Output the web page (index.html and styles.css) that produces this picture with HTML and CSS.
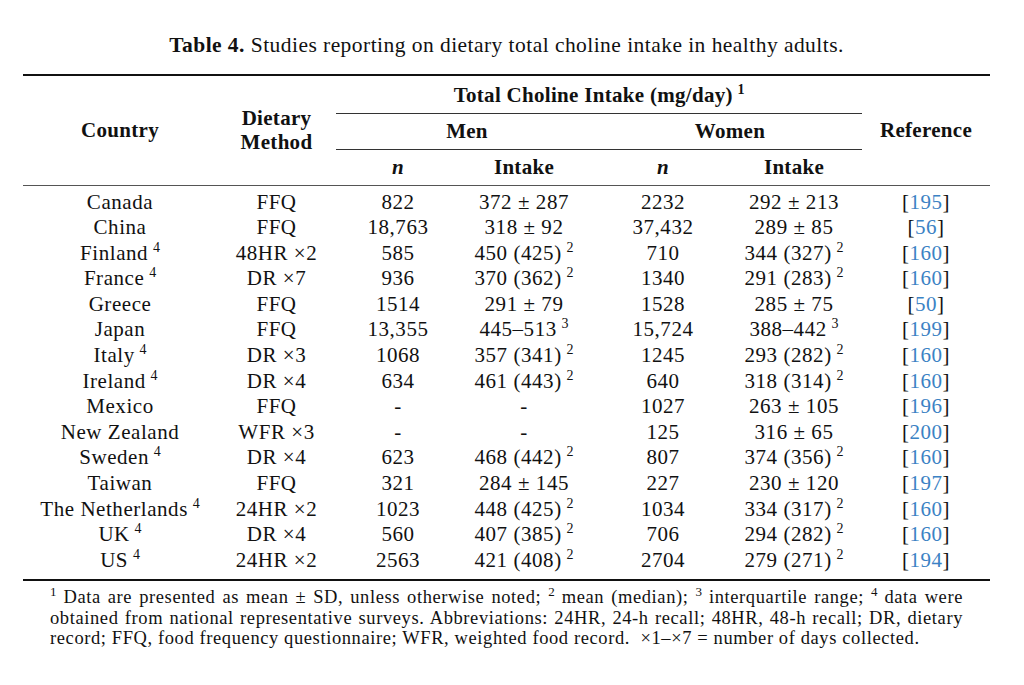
FILE: index.html
```html
<!DOCTYPE html>
<html>
<head>
<meta charset="utf-8">
<link rel="stylesheet" href="styles.css">
</head>
<body>
<div class="page">
  <p class="caption"><b>Table 4.</b> Studies reporting on dietary total choline intake in healthy adults.</p>
  <table class="tbl">
    <colgroup>
      <col class="c1"><col class="c2"><col class="c3"><col class="c4"><col class="c5"><col class="c6"><col class="c7">
    </colgroup>
    <thead>
      <tr class="h1">
        <th rowspan="3">Country</th>
        <th rowspan="3" class="two">Dietary<br>Method</th>
        <th colspan="4" class="grp">Total Choline Intake (mg/day) <sup>1</sup></th>
        <th rowspan="3">Reference</th>
      </tr>
      <tr class="h2">
        <th colspan="2" class="grp">Men</th>
        <th colspan="2" class="grp">Women</th>
      </tr>
      <tr class="h3">
        <th><i>n</i></th>
        <th class="mi">Intake</th>
        <th><i>n</i></th>
        <th class="wi">Intake</th>
      </tr>
    </thead>
    <tbody>
      <tr class="first"><td>Canada</td><td>FFQ</td><td>822</td><td class="mi">372 ± 287</td><td>2232</td><td class="wi">292 ± 213</td><td class="ref">[<a>195</a>]</td></tr>
      <tr><td>China</td><td>FFQ</td><td>18,763</td><td class="mi">318 ± 92</td><td>37,432</td><td class="wi">289 ± 85</td><td class="ref">[<a>56</a>]</td></tr>
      <tr><td>Finland <sup>4</sup></td><td>48HR ×2</td><td>585</td><td class="mi">450 (425) <sup>2</sup></td><td>710</td><td class="wi">344 (327) <sup>2</sup></td><td class="ref">[<a>160</a>]</td></tr>
      <tr><td>France <sup>4</sup></td><td>DR ×7</td><td>936</td><td class="mi">370 (362) <sup>2</sup></td><td>1340</td><td class="wi">291 (283) <sup>2</sup></td><td class="ref">[<a>160</a>]</td></tr>
      <tr><td>Greece</td><td>FFQ</td><td>1514</td><td class="mi">291 ± 79</td><td>1528</td><td class="wi">285 ± 75</td><td class="ref">[<a>50</a>]</td></tr>
      <tr><td>Japan</td><td>FFQ</td><td>13,355</td><td class="mi">445–513 <sup>3</sup></td><td>15,724</td><td class="wi">388–442 <sup>3</sup></td><td class="ref">[<a>199</a>]</td></tr>
      <tr><td>Italy <sup>4</sup></td><td>DR ×3</td><td>1068</td><td class="mi">357 (341) <sup>2</sup></td><td>1245</td><td class="wi">293 (282) <sup>2</sup></td><td class="ref">[<a>160</a>]</td></tr>
      <tr><td>Ireland <sup>4</sup></td><td>DR ×4</td><td>634</td><td class="mi">461 (443) <sup>2</sup></td><td>640</td><td class="wi">318 (314) <sup>2</sup></td><td class="ref">[<a>160</a>]</td></tr>
      <tr><td>Mexico</td><td>FFQ</td><td>-</td><td class="mi">-</td><td>1027</td><td class="wi">263 ± 105</td><td class="ref">[<a>196</a>]</td></tr>
      <tr><td>New Zealand</td><td>WFR ×3</td><td>-</td><td class="mi">-</td><td>125</td><td class="wi">316 ± 65</td><td class="ref">[<a>200</a>]</td></tr>
      <tr><td>Sweden <sup>4</sup></td><td>DR ×4</td><td>623</td><td class="mi">468 (442) <sup>2</sup></td><td>807</td><td class="wi">374 (356) <sup>2</sup></td><td class="ref">[<a>160</a>]</td></tr>
      <tr><td>Taiwan</td><td>FFQ</td><td>321</td><td class="mi">284 ± 145</td><td>227</td><td class="wi">230 ± 120</td><td class="ref">[<a>197</a>]</td></tr>
      <tr><td>The Netherlands <sup>4</sup></td><td>24HR ×2</td><td>1023</td><td class="mi">448 (425) <sup>2</sup></td><td>1034</td><td class="wi">334 (317) <sup>2</sup></td><td class="ref">[<a>160</a>]</td></tr>
      <tr><td>UK <sup>4</sup></td><td>DR ×4</td><td>560</td><td class="mi">407 (385) <sup>2</sup></td><td>706</td><td class="wi">294 (282) <sup>2</sup></td><td class="ref">[<a>160</a>]</td></tr>
      <tr class="last"><td>US <sup>4</sup></td><td>24HR ×2</td><td>2563</td><td class="mi">421 (408) <sup>2</sup></td><td>2704</td><td class="wi">279 (271) <sup>2</sup></td><td class="ref">[<a>194</a>]</td></tr>
    </tbody>
  </table>
  <div class="notes">
    <span class="jl"><sup>1</sup> Data are presented as mean ± SD, unless otherwise noted; <sup>2</sup> mean (median); <sup>3</sup> interquartile range; <sup>4</sup> data were</span>
    <span class="jl">obtained from national representative surveys. Abbreviations: 24HR, 24-h recall; 48HR, 48-h recall; DR, dietary</span>
    <span class="ll">record; FFQ, food frequency questionnaire; WFR, weighted food record. &nbsp;×1–×7 = number of days collected.</span>
  </div>
</div>
</body>
</html>
```

FILE: styles.css
```css
html, body {
  margin: 0;
  padding: 0;
  background: #ffffff;
}

body {
  font-family: "Liberation Serif", "Times New Roman", serif;
  color: #111111;
}

.page {
  width: 967px;
  padding-left: 23px;
}

.caption {
  margin: 32px 0 0;
  height: 42px;
  line-height: 26px;
  font-size: 21.5px;
  text-align: center;
  letter-spacing: 0.45px;
}

.tbl {
  width: 967px;
  table-layout: fixed;
  border-collapse: collapse;
  font-size: 21px;
  letter-spacing: 0.55px;
}

col.c1 { width: 194px; }
col.c2 { width: 119px; }
col.c3 { width: 124px; }
col.c4 { width: 138px; }
col.c5 { width: 130px; }
col.c6 { width: 134px; }
col.c7 { width: 128px; }

.tbl th, .tbl td {
  padding: 0;
  text-align: center;
  vertical-align: middle;
  white-space: nowrap;
}

.tbl th {
  font-weight: bold;
  letter-spacing: 0.3px;
}

.tbl thead tr.h1 th {
  border-top: 2px solid #111111;
}

.tbl tr.h1 { height: 38px; }
.tbl tr.h2 { height: 36px; }
.tbl tr.h3 { height: 36px; }

.tbl th.grp {
  border-bottom: 1px solid #333333;
}

.tbl tr.h1 th.grp {
  padding-top: 3px;
}

.tbl tr.h3 th {
  padding-top: 1px;
}

.tbl thead tr.h3 th,
.tbl thead th[rowspan] {
  border-bottom: 1px solid #555555;
}

.tbl th.two {
  line-height: 24px;
}

.tbl td {
  height: 25.6px;
  line-height: 25.6px;
}

.tbl tr.first td {
  padding-top: 4px;
}

.tbl tr.last td {
  padding-bottom: 6px;
  border-bottom: 2px solid #111111;
}

.tbl .mi { padding-right: 10px; }
.tbl .wi { padding-right: 2px; }

.tbl sup {
  font-size: 14px;
  line-height: 0;
  vertical-align: 8px;
  letter-spacing: 0;
  margin-left: -1px;
}

.ref a {
  color: #3b82c4;
  text-decoration: none;
}

.notes {
  margin: 6px 0 0 27px;
  width: 913px;
  font-size: 18.5px;
  line-height: 20.5px;
  letter-spacing: 0.6px;
}

.notes .jl {
  display: block;
  text-align: justify;
  text-align-last: justify;
}

.notes .ll {
  display: block;
}

.notes sup {
  font-size: 13px;
  line-height: 0;
  vertical-align: 7px;
  letter-spacing: 0;
}
```
